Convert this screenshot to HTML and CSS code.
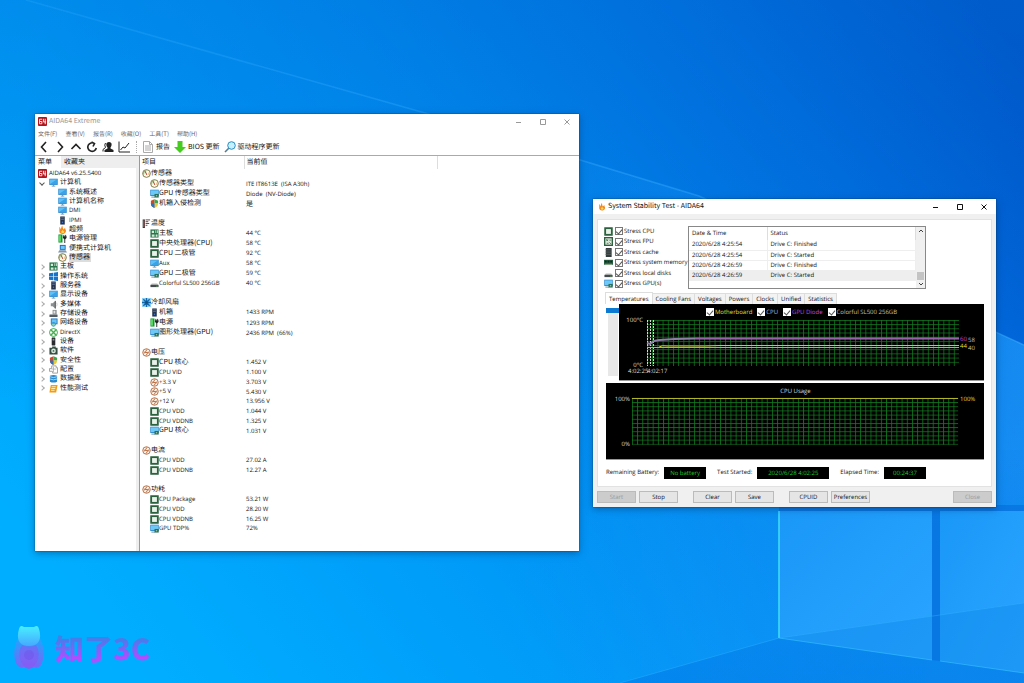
FILE: index.html
```html
<!DOCTYPE html>
<html lang="en">
<head>
<meta charset="utf-8">
<title>AIDA64 Extreme</title>
<link rel="stylesheet" href="styles.css">
</head>
<body>
<svg class="sprite" aria-hidden="true">
  <symbol id="aida" viewBox="0 0 10 10"><rect width="10" height="10" rx="1" fill="#b3141b"/><path d="M4.600 2.500H1.700v5h2.600V5H2M6 2v3.500h3M8 2v6" fill="none" stroke="#fff" stroke-width="1"/></symbol>
  <symbol id="monitor" viewBox="0 0 10 10"><rect x=".3" y=".8" width="9.400" height="6.900" fill="#2b87cf"/><rect x="1" y="1.500" width="8" height="5.300" fill="#5fc0f5"/><path d="M1 6.800 9 1.500v5.300z" fill="#38a3e8"/><path d="M3 9h4M5 7.500V9" stroke="#6c93ad"/></symbol>
  <symbol id="gpu" viewBox="0 0 10 10"><rect x=".3" y=".8" width="9.400" height="7" fill="#2b87cf"/><rect x="1" y="1.500" width="8" height="5.300" fill="#6cc8f7"/><path d="M1.500 9h4" stroke="#5f8aa5"/><rect x="5" y="5.500" width="4.700" height="4" fill="#2b6f58"/><rect x="6.500" y="6.700" width="1.500" height="1.500" fill="#8fc4a0"/></symbol>
  <symbol id="server" viewBox="0 0 10 10"><rect x="2.500" y=".5" width="5" height="9" fill="#26334c"/><path d="M3.500 2h3M3.500 3.800h3" stroke="#7d95bd" stroke-width=".7"/><circle cx="5" cy="7" r=".8" fill="#4979c9"/></symbol>
  <symbol id="fire" viewBox="0 0 10 10"><path d="M1.500 2c1 1 1.200 2 1.500 3L4.500.5C5.500 2 5 3 6 5l2-2c-.5 2 1.500 2 .7 4.500C8 9.500 6.500 10 5 10 3 10 1.500 9 1.500 7z" fill="#f48a1c"/><path d="M3.500 7.500 5 5.500l2 2c0 2-3.500 2-3.500 0" fill="#ffd75c"/></symbol>
  <symbol id="power" viewBox="0 0 10 10"><rect x=".5" y=".5" width="4.500" height="9" fill="#159b32"/><rect x="1.200" y="1.500" width="2" height="7" fill="#5fdf65"/><path d="M7.500 4v6M6.500 1v2M8.500 1v2" stroke="#222"/><path d="M5.500 2.500h4v2l-2 1.500-2-1.500z" fill="#222"/></symbol>
  <symbol id="laptop" viewBox="0 0 10 10"><path d="M2 1h6.500v5.500H2z" fill="#1f69b7"/><path d="M3 2h4.500v3.500H3z" fill="#6cc7f7"/><path d="M1.500 7h7L10 9.500H0z" fill="#7d98b6"/></symbol>
  <symbol id="gauge" viewBox="0 0 10 10"><circle cx="5" cy="5" r="4.300" fill="#fffbe9" stroke="#63622c" stroke-width=".9"/><path d="M2 6A3 3 0 0 1 5 2" fill="none" stroke="#5aa54a" stroke-width=".9"/><path d="M3.500 2.500 5.300 6.500" stroke="#ba2c20" stroke-width="1.100"/><path d="M7.700 4v2.500" stroke="#e28b28" stroke-width=".9"/></symbol>
  <symbol id="board" viewBox="0 0 10 10"><rect x=".5" y=".5" width="9" height="9" fill="#28764c"/><path d="M2 2h2.500v2.500H2zM6 1.500h1v3H6zM8 1.500h1v3H8zM2 6h3v2.500H2zM6.300 6h2v2.500h-2z" fill="#d6ead7"/></symbol>
  <symbol id="cpu" viewBox="0 0 10 10"><rect x=".3" y=".3" width="9.400" height="9.400" fill="#285e3d"/><rect x="2.300" y="2.300" width="5.400" height="5.400" fill="#e9f2e8"/><path d="M1 1h8v8H1z" fill="none" stroke="#52865f" stroke-width=".5" stroke-dasharray="1 1"/></symbol>
  <symbol id="windows" viewBox="0 0 10 10"><path d="M0 1.500 4.500.8v3.900H0zM5.200.7 10 0v4.700H5.200zM0 5.300h4.500v3.900L0 8.500zM5.200 5.300H10V10l-4.800-.7z" fill="#1473cb"/></symbol>
  <symbol id="sound" viewBox="0 0 10 10"><path d="M2 3.500h2L7 1v8.500L4 7H2z" fill="#8b9092"/><path d="M7 1v8.500" stroke="#444"/><path d="M8.500 3q1 2 0 4" fill="none" stroke="#aaa" stroke-width=".6"/></symbol>
  <symbol id="drive" viewBox="0 0 10 10"><path d="M2 5h6l1.500 2h-9z" fill="#bbb"/><rect x=".5" y="6.500" width="9" height="2.500" fill="#454a4c"/><path d="M7 8h1.500" stroke="#68cf62" stroke-width=".8"/></symbol>
  <symbol id="storage" viewBox="0 0 10 10"><path d="M4 1h4.500v5H4z" fill="#8b9092"/><path d="M5 2h2v3H5z" fill="#e4e4e4"/><rect x=".5" y="6" width="9" height="3" rx=".5" fill="#555e62"/></symbol>
  <symbol id="network" viewBox="0 0 10 10"><path d="M2 .5h7.500v6.500H2z" fill="#2178bf"/><path d="M3 1.500h5.500v4.500H3z" fill="#69c3f4"/><circle cx="5" cy="7" r="2.600" fill="#3595da"/><path d="M3 6.500h4l-1 2H4z" fill="#8bd4ba"/></symbol>
  <symbol id="directx" viewBox="0 0 10 10"><circle cx="5" cy="5" r="4.400" fill="#f4fff1" stroke="#2e9d43"/><path d="m2 2 6 6M8 2 2 8" stroke="#45ad51" stroke-width="1.500"/></symbol>
  <symbol id="device" viewBox="0 0 10 10"><rect x="3" y=".5" width="4" height="9" rx=".5" fill="#292b2d"/><path d="M4 2h2v2H4z" fill="#879098"/></symbol>
  <symbol id="software" viewBox="0 0 10 10"><path d="M.5 2h3V.5h4V2h2v7.500h-9z" fill="#354c41"/><circle cx="5" cy="5.500" r="2.600" fill="#dce8df"/><circle cx="5" cy="5.500" r="1" fill="#32785d"/></symbol>
  <symbol id="shield" viewBox="0 0 10 10"><path d="M5 .3 1 2v3c0 3 2 4 4 5z" fill="#ca4b2b"/><path d="m5 .3 4 1.700v3H5z" fill="#3fa44b"/><path d="M5 5h4c0 3-2 4-4 5z" fill="#f0c830"/><path d="M5 5H1c0 3 2 4 4 5z" fill="#2773bd"/></symbol>
  <symbol id="config" viewBox="0 0 10 10"><path d="M3 1h5v2h1.500v6H4V7H.5V4H3z" fill="none" stroke="#999"/><path d="M3 4.500h5M5 2v6" stroke="#999" stroke-width=".7"/></symbol>
  <symbol id="database" viewBox="0 0 10 10"><path d="M1 2q4-2 8 0v6.500q-4 2-8 0z" fill="#2888ce"/><path d="M1 3q4 2 8 0M1 5.500q4 2 8 0" fill="none" stroke="#c3e5fc" stroke-width=".9"/></symbol>
  <symbol id="bench" viewBox="0 0 10 10"><path d="M2 1h7.500L8 9.500H.5z" fill="#f19b16"/><path d="m3 3h4.500M2.500 5H7M2.200 7h4" stroke="#fff2bd"/></symbol>
  <symbol id="thermo" viewBox="0 0 10 10"><path d="M2 .5V10" stroke="#37363a" stroke-width="2.500"/><path d="M2 1.500V9" stroke="#d65147"/><path d="M4 1h5M4 3h3M4 5h4M4 7h2" stroke="#5c3434"/></symbol>
  <symbol id="fan" viewBox="0 0 10 10"><rect width="10" height="10" fill="#8fd0f4"/><path d="M5 0v10M0 5h10M1.500 1.500l7 7M8.500 1.500l-7 7" stroke="#1467a8" stroke-width="1.500"/><circle cx="5" cy="5" r="1.500" fill="#164c77"/></symbol>
  <symbol id="volt" viewBox="0 0 10 10"><circle cx="5" cy="5" r="4.200" fill="#fff1e7" stroke="#a75a2e" stroke-width=".9"/><path d="M5.500 1.500 3.500 5h3L4.500 8.500M2.500 4v2M7.500 4v2" fill="none" stroke="#aa5526" stroke-width=".9"/></symbol>
  <symbol id="fpu" viewBox="0 0 10 10"><rect width="10" height="10" fill="#2e6041"/><rect x="1.500" y="1.500" width="7" height="7" fill="#dbe8da"/><path d="m2.500 2.500 2 2m0-2-2 2M6 3.500h2M3 7h2M6 6l2 2" stroke="#285c3a" stroke-width=".8"/></symbol>
  <symbol id="cache" viewBox="0 0 10 10"><path d="M2 0h6.500v10H2z" fill="#333a3b"/><path d="M1 2h8M1 4.500h8M1 7h8" stroke="#727979" stroke-width=".6"/></symbol>
  <symbol id="memory" viewBox="0 0 10 10"><rect y="2" width="10" height="5.500" fill="#265d41"/><path d="M1 3h2v2H1zM4 3h2v2H4zM7 3h2v2H7z" fill="#132b21"/><path d="M1 7h8" stroke="#c4d7a2" stroke-dasharray=".7 .5"/></symbol>
</svg>

<svg class="wallpaper" viewBox="0 0 1024 683" preserveAspectRatio="none" aria-hidden="true">
  <defs>
    <linearGradient id="sky" x1="150" y1="683" x2="980" y2="0" gradientUnits="userSpaceOnUse"><stop offset="0" stop-color="#00aeff"/><stop offset=".3" stop-color="#009bf8"/><stop offset=".55" stop-color="#0086ed"/><stop offset=".8" stop-color="#0069dc"/><stop offset="1" stop-color="#004fc4"/></linearGradient>
    <linearGradient id="shade" x1="0" y1="0" x2="0" y2="400" gradientUnits="userSpaceOnUse"><stop offset="0" stop-color="#0074d8" stop-opacity=".35"/><stop offset="1" stop-color="#0074d8" stop-opacity="0"/></linearGradient>
    <linearGradient id="beam" x1="500" y1="0" x2="1024" y2="0" gradientUnits="userSpaceOnUse"><stop offset="0" stop-color="#1c9dff" stop-opacity="0"/><stop offset="1" stop-color="#24a2ff" stop-opacity=".6"/></linearGradient>
    <linearGradient id="fall" x1="0" y1="400" x2="0" y2="683" gradientUnits="userSpaceOnUse"><stop offset="0" stop-color="#0078e7" stop-opacity="0"/><stop offset="1" stop-color="#0078e6" stop-opacity=".5"/></linearGradient>
    <linearGradient id="ray" x1="0" y1="0" x2="1" y2="0"><stop offset="0" stop-color="#31adff" stop-opacity=".25"/><stop offset="1" stop-color="#45b7ff" stop-opacity=".45"/></linearGradient>
    <linearGradient id="pane" x1="0" y1="0" x2="1" y2="1"><stop offset="0" stop-color="#1a98f8"/><stop offset="1" stop-color="#2aa4ff"/></linearGradient>
  </defs>
  <rect width="1024" height="683" fill="url(#sky)"/>
  <rect width="1024" height="400" fill="url(#shade)"/>
  <path d="M26 0 425 113 699 196 1024 345V683H500V135z" fill="url(#beam)"/>
  <path d="M779 450H1024V683H620L779 638z" fill="url(#fall)"/>
  <path d="M26 0 425 113 699 196 1024 345" fill="none" stroke="url(#ray)" stroke-width="1.500"/>
  <path d="M779 505H1024V511H779zM932 511h8v150l-8-1z" fill="#0873de" opacity=".8"/>
  <path d="M779 511h153v149l-153-22z" fill="url(#pane)"/>
  <path d="M940 511h84v162l-84-12z" fill="url(#pane)"/>
  <path d="m779 638 153-22v44zM940 615l84-12v70l-84-12z" fill="#0d86ea" opacity=".4"/>
  <path d="M779 638l153 22M940 661l84 12" fill="none" stroke="#35c2ff" opacity=".6"/>
  <path d="M779 511v127" stroke="#3edaff" stroke-width="2" opacity=".8"/>
  <path d="m620 683 159-45 245-35" fill="none" stroke="#38b5ff" opacity=".4"/>
</svg>

<main class="desktop">
<section class="window explorer" aria-label="AIDA64 Extreme">
  <header class="titlebar">
    <svg class="icon"><use href="#aida"/></svg><h1>AIDA64 Extreme</h1>
    <div class="controls">
      <button aria-label="Minimize"><svg viewBox="0 0 8 8"><path d="M1 4.500h5"/></svg></button>
      <button aria-label="Maximize"><svg viewBox="0 0 8 8"><path d="M1.500 1.500h5v5h-5z"/></svg></button>
      <button aria-label="Close"><svg viewBox="0 0 8 8"><path d="m1.500 1.500 5 5m0-5-5 5"/></svg></button>
    </div>
  </header>
  <nav class="menu"><button>文件(F)</button><button>查看(V)</button><button>报告(R)</button><button>收藏(O)</button><button>工具(T)</button><button>帮助(H)</button></nav>
  <div class="toolbar">
    <button aria-label="Back"><svg viewBox="0 0 12 12"><path d="M8 1 3.500 6 8 11"/></svg></button>
    <button aria-label="Forward"><svg viewBox="0 0 12 12"><path d="m4 1 4.500 5L4 11"/></svg></button>
    <button aria-label="Up"><svg viewBox="0 0 12 12"><path d="m1.500 8 4.500-4.500L10.500 8"/></svg></button>
    <button aria-label="Refresh"><svg viewBox="0 0 12 12"><path d="M8.500 2.500A4.300 4.300 0 1 0 10.300 7M5.500 1l3 1.500L7 5.500"/></svg></button>
    <button aria-label="User"><svg viewBox="0 0 12 12"><path class="solid" d="M7 1c3.500 0 3 4 1.500 5.500V7.500l3 1.500V11H2.500V9l3-1.500V6.500C4 5 3.500 1 7 1"/><path class="thin" d="M3.500 2Q2 4 3.500 6.500L1 8.500v2"/></svg></button>
    <button aria-label="Graph"><svg viewBox="0 0 12 12"><path class="thin" d="M1 .5v10.500h11"/><path class="thin" d="m2.500 9 2.500-3 2 1 4-5"/></svg></button>
    <i class="divider"></i>
    <button><svg viewBox="0 0 12 12"><path class="page" d="M1.500.5h6l3 3v8h-9zM7.500.5v3h3M3 5h6M3 7h6M3 9h6"/></svg>报告</button>
    <button><svg viewBox="0 0 12 12"><path class="arrow" d="M3.500 0h5v6H12l-6 6-6-6h3.500z"/></svg>BIOS 更新</button>
    <button><svg viewBox="0 0 12 12"><path class="handle" d="m1 11 4-4"/><circle class="lens" cx="7.500" cy="4.500" r="3.800"/></svg>驱动程序更新</button>
  </div>
  <div class="workspace">
    <aside class="sidebar">
      <div class="side-tabs" role="tablist"><button role="tab" aria-selected="true">菜单</button><button role="tab" aria-selected="false">收藏夹</button></div>
      <ul class="tree">
        <li class="root en"><svg class="icon"><use href="#aida"/></svg>AIDA64 v6.25.5400</li>
        <li class="branch open"><svg class="icon"><use href="#monitor"/></svg>计算机</li>
        <li class="leaf"><svg class="icon"><use href="#monitor"/></svg>系统概述</li>
        <li class="leaf"><svg class="icon"><use href="#monitor"/></svg>计算机名称</li>
        <li class="leaf en"><svg class="icon"><use href="#monitor"/></svg>DMI</li>
        <li class="leaf en"><svg class="icon"><use href="#server"/></svg>IPMI</li>
        <li class="leaf"><svg class="icon"><use href="#fire"/></svg>超频</li>
        <li class="leaf"><svg class="icon"><use href="#power"/></svg>电源管理</li>
        <li class="leaf"><svg class="icon"><use href="#laptop"/></svg>便携式计算机</li>
        <li class="leaf"><svg class="icon"><use href="#gauge"/></svg><span class="selected">传感器</span></li>
        <li class="branch"><svg class="icon"><use href="#board"/></svg>主板</li>
        <li class="branch"><svg class="icon"><use href="#windows"/></svg>操作系统</li>
        <li class="branch"><svg class="icon"><use href="#server"/></svg>服务器</li>
        <li class="branch"><svg class="icon"><use href="#monitor"/></svg>显示设备</li>
        <li class="branch"><svg class="icon"><use href="#sound"/></svg>多媒体</li>
        <li class="branch"><svg class="icon"><use href="#storage"/></svg>存储设备</li>
        <li class="branch"><svg class="icon"><use href="#network"/></svg>网络设备</li>
        <li class="branch en"><svg class="icon"><use href="#directx"/></svg>DirectX</li>
        <li class="branch"><svg class="icon"><use href="#device"/></svg>设备</li>
        <li class="branch"><svg class="icon"><use href="#software"/></svg>软件</li>
        <li class="branch"><svg class="icon"><use href="#shield"/></svg>安全性</li>
        <li class="branch"><svg class="icon"><use href="#config"/></svg>配置</li>
        <li class="branch"><svg class="icon"><use href="#database"/></svg>数据库</li>
        <li class="branch"><svg class="icon"><use href="#bench"/></svg>性能测试</li>
      </ul>
    </aside>
    <div class="details">
      <table class="sensors">
        <thead><tr><th class="name">项目</th><th class="value">当前值</th><th></th></tr></thead>
        <tbody>
        <tr class="group"><td><svg class="icon"><use href="#gauge"/></svg>传感器</td><td></td></tr>
        <tr><td><svg class="icon"><use href="#gauge"/></svg>传感器类型</td><td class="en">ITE IT8613E&nbsp; (ISA A30h)</td></tr>
        <tr><td><svg class="icon"><use href="#gpu"/></svg>GPU 传感器类型</td><td class="en">Diode&nbsp; (NV-Diode)</td></tr>
        <tr><td><svg class="icon"><use href="#shield"/></svg>机箱入侵检测</td><td>是</td></tr>
        <tr><td>&nbsp;</td></tr>
        <tr class="group"><td><svg class="icon"><use href="#thermo"/></svg>温度</td><td></td></tr>
        <tr><td><svg class="icon"><use href="#board"/></svg>主板</td><td class="en">44 °C</td></tr>
        <tr><td><svg class="icon"><use href="#cpu"/></svg>中央处理器(CPU)</td><td class="en">58 °C</td></tr>
        <tr><td><svg class="icon"><use href="#cpu"/></svg>CPU 二极管</td><td class="en">92 °C</td></tr>
        <tr class="en"><td><svg class="icon"><use href="#monitor"/></svg>Aux</td><td>58 °C</td></tr>
        <tr><td><svg class="icon"><use href="#gpu"/></svg>GPU 二极管</td><td class="en">59 °C</td></tr>
        <tr class="en"><td><svg class="icon"><use href="#drive"/></svg>Colorful SL500 256GB</td><td>40 °C</td></tr>
        <tr><td>&nbsp;</td></tr>
        <tr class="group"><td><svg class="icon"><use href="#fan"/></svg>冷却风扇</td><td></td></tr>
        <tr><td><svg class="icon"><use href="#server"/></svg>机箱</td><td class="en">1433 RPM</td></tr>
        <tr><td><svg class="icon"><use href="#power"/></svg>电源</td><td class="en">1293 RPM</td></tr>
        <tr><td><svg class="icon"><use href="#gpu"/></svg>图形处理器(GPU)</td><td class="en">2436 RPM&nbsp; (66%)</td></tr>
        <tr><td>&nbsp;</td></tr>
        <tr class="group"><td><svg class="icon"><use href="#volt"/></svg>电压</td><td></td></tr>
        <tr><td><svg class="icon"><use href="#cpu"/></svg>CPU 核心</td><td class="en">1.452 V</td></tr>
        <tr class="en"><td><svg class="icon"><use href="#cpu"/></svg>CPU VID</td><td>1.100 V</td></tr>
        <tr class="en"><td><svg class="icon"><use href="#volt"/></svg>+3.3 V</td><td>3.703 V</td></tr>
        <tr class="en"><td><svg class="icon"><use href="#volt"/></svg>+5 V</td><td>5.430 V</td></tr>
        <tr class="en"><td><svg class="icon"><use href="#volt"/></svg>+12 V</td><td>13.956 V</td></tr>
        <tr class="en"><td><svg class="icon"><use href="#cpu"/></svg>CPU VDD</td><td>1.044 V</td></tr>
        <tr class="en"><td><svg class="icon"><use href="#cpu"/></svg>CPU VDDNB</td><td>1.325 V</td></tr>
        <tr><td><svg class="icon"><use href="#gpu"/></svg>GPU 核心</td><td class="en">1.031 V</td></tr>
        <tr><td>&nbsp;</td></tr>
        <tr class="group"><td><svg class="icon"><use href="#volt"/></svg>电流</td><td></td></tr>
        <tr class="en"><td><svg class="icon"><use href="#cpu"/></svg>CPU VDD</td><td>27.02 A</td></tr>
        <tr class="en"><td><svg class="icon"><use href="#cpu"/></svg>CPU VDDNB</td><td>12.27 A</td></tr>
        <tr><td>&nbsp;</td></tr>
        <tr class="group"><td><svg class="icon"><use href="#volt"/></svg>功耗</td><td></td></tr>
        <tr class="en"><td><svg class="icon"><use href="#cpu"/></svg>CPU Package</td><td>53.21 W</td></tr>
        <tr class="en"><td><svg class="icon"><use href="#cpu"/></svg>CPU VDD</td><td>28.20 W</td></tr>
        <tr class="en"><td><svg class="icon"><use href="#cpu"/></svg>CPU VDDNB</td><td>16.25 W</td></tr>
        <tr class="en"><td><svg class="icon"><use href="#gpu"/></svg>GPU TDP%</td><td>72%</td></tr>
        </tbody>
      </table>
    </div>
  </div>
</section>

<section class="window stability" aria-label="System Stability Test">
  <header class="titlebar">
    <svg class="icon"><use href="#fire"/></svg><h2>System Stability Test - AIDA64</h2>
    <div class="controls">
      <button aria-label="Minimize"><svg viewBox="0 0 8 8"><path d="M1 4.500h5"/></svg></button>
      <button aria-label="Maximize"><svg viewBox="0 0 8 8"><path d="M1.500 1.500h5v5h-5z"/></svg></button>
      <button aria-label="Close"><svg viewBox="0 0 8 8"><path d="m1.500 1.500 5 5m0-5-5 5"/></svg></button>
    </div>
  </header>
  <div class="frame en">
    <div class="panel">
      <div class="top">
        <div class="stress">
          <label><svg class="icon"><use href="#cpu"/></svg><input type="checkbox" checked>Stress CPU</label>
          <label><svg class="icon"><use href="#fpu"/></svg><input type="checkbox" checked>Stress FPU</label>
          <label><svg class="icon"><use href="#cache"/></svg><input type="checkbox" checked>Stress cache</label>
          <label><svg class="icon"><use href="#memory"/></svg><input type="checkbox" checked>Stress system memory</label>
          <label><svg class="icon"><use href="#drive"/></svg><input type="checkbox" checked>Stress local disks</label>
          <label><svg class="icon"><use href="#gpu"/></svg><input type="checkbox" checked>Stress GPU(s)</label>
        </div>
        <div class="log">
          <table>
            <thead><tr><th>Date &amp; Time</th><th>Status</th></tr></thead>
            <tbody>
              <tr><td>2020/6/28 4:25:54</td><td>Drive C: Finished</td></tr>
              <tr><td>2020/6/28 4:25:54</td><td>Drive C: Started</td></tr>
              <tr><td>2020/6/28 4:26:59</td><td>Drive C: Finished</td></tr>
              <tr class="current"><td>2020/6/28 4:26:59</td><td>Drive C: Started</td></tr>
            </tbody>
          </table>
          <div class="scroll"><svg viewBox="0 0 8 8"><path d="m2 5 2-2 2 2"/></svg><i></i><svg viewBox="0 0 8 8"><path d="m2 3 2 2 2-2"/></svg></div>
        </div>
      </div>
      <div class="tabs" role="tablist">
        <button role="tab" aria-selected="true">Temperatures</button><button role="tab">Cooling Fans</button><button role="tab">Voltages</button><button role="tab">Powers</button><button role="tab">Clocks</button><button role="tab">Unified</button><button role="tab">Statistics</button>
      </div>
      <div class="temps">
        <div class="picker"><i></i></div>
        <div class="chart">
          <div class="legend">
            <label class="yellow"><input type="checkbox" checked>Motherboard</label>
            <label class="silver"><input type="checkbox" checked>CPU</label>
            <label class="magenta"><input type="checkbox" checked>GPU Diode</label>
            <label class="tan"><input type="checkbox" checked>Colorful SL500 256GB</label>
          </div>
          <svg viewBox="0 0 365 64">
            <defs><pattern id="cells" width="5.200" height="4.180" patternUnits="userSpaceOnUse" x="28" y="4"><path d="M0 .5H5.200M.5 0V4.180" fill="none" stroke="#12791f" stroke-width=".8"/></pattern></defs>
            <rect x="28" y="4" width="312" height="46" fill="url(#cells)"/>
            <path d="M28.500 4v46M31.500 4v46M34.500 4v46" stroke="#d5d5d5" stroke-dasharray="2 1"/>
            <path d="m28 27 3 1 4-3 5-1 16-1 20-.5h264" fill="none" stroke="#8e7fa6" stroke-width="2"/>
            <path d="M76 22.500h264" stroke="#9e55aa" stroke-width=".7"/>
            <path d="M28 31.500h312" stroke="#b8aa85"/>
            <path d="M40 31q3-2 8-1h38l15-.5h239" fill="none" stroke="#cccb26"/>
            <g class="scale"><text x="24" y="6" text-anchor="end">100°C</text><text x="24" y="51" text-anchor="end">0°C</text><text x="9" y="57">4:02:25</text><text x="28" y="57">4:02:17</text></g>
            <g class="scale"><text class="magenta" x="341" y="25">60</text><text class="silver" x="349" y="26">58</text><text class="yellow" x="341" y="32">44</text><text class="tan" x="349" y="34">40</text></g>
          </svg>
        </div>
      </div>
      <div class="chart usage">
        <svg viewBox="0 0 379 76">
          <defs><pattern id="usage-cells" width="5.200" height="4.180" patternUnits="userSpaceOnUse" x="26" y="15"><path d="M0 .5H5.200M.5 0V4.180" fill="none" stroke="#12791f" stroke-width=".8"/></pattern></defs>
          <rect x="26" y="15" width="327" height="47" fill="url(#usage-cells)"/>
          <path d="M26 15.500h327" stroke="#b8b92c"/>
          <g class="scale"><text x="190" y="10" text-anchor="middle">CPU Usage</text><text x="24" y="18" text-anchor="end">100%</text><text x="24" y="63" text-anchor="end">0%</text><text class="yellow" x="355" y="18">100%</text></g>
        </svg>
      </div>
      <div class="status">
        <span>Remaining Battery:</span><output>No battery</output>
        <span>Test Started:</span><output class="wide">2020/6/28 4:02:25</output>
        <span>Elapsed Time:</span><output>00:24:37</output>
      </div>
    </div>
    <footer class="actions">
      <button disabled>Start</button><button>Stop</button>
      <button class="apart">Clear</button><button>Save</button>
      <button class="apart">CPUID</button><button>Preferences</button>
      <button class="last" disabled>Close</button>
    </footer>
  </div>
</section>

<div class="brand">
  <svg viewBox="0 0 32 46" aria-hidden="true">
    <defs><linearGradient id="body" x1="0" y1="0" x2="0" y2="1"><stop offset="0" stop-color="#25a5ff"/><stop offset="1" stop-color="#a64cf5"/></linearGradient><linearGradient id="head" x1="0" y1="0" x2="0" y2="1"><stop offset="0" stop-color="#49efff"/><stop offset="1" stop-color="#45a9ff"/></linearGradient></defs>
    <path d="M6 12C0 20 0 36 5 41q3 3 6 1 5 3 10 0 3 2 6-1c5-5 5-21-1-29z" fill="url(#body)" opacity=".75"/>
    <path d="M9 20q7 3 14 0c5 8 3 20-7 24C6 40 4 28 9 20" fill="#964ff1" opacity=".5"/>
    <circle cx="16" cy="30" r="5" fill="#704ce6" opacity=".35"/>
    <path d="M6 4Q7-1 11 2h10q4-3 5 2c3 10 0 17-10 17S3 14 6 4" fill="url(#head)"/>
  </svg>
  <span>知了3C</span>
</div>
</main>
</body>
</html>
```

FILE: styles.css
```css
* { box-sizing: border-box; }
body { margin: 0; min-height: 100vh; overflow: hidden; color: #111; font: 7px/9px "Noto Sans CJK SC", "Open Sans", sans-serif; text-rendering: geometricPrecision; }
h1, h2 { margin: 0; font: inherit; }
button { margin: 0; padding: 0; border: 0; background: none; color: inherit; font: inherit; text-rendering: inherit; white-space: nowrap; }
table { border-collapse: collapse; border-spacing: 0; }
th, td { padding: 0; font-weight: 400; text-align: left; white-space: nowrap; }
.en { font-family: "Open Sans", sans-serif; font-size: 6px; }
.sprite { position: absolute; width: 0; height: 0; }
.wallpaper { position: absolute; width: 100%; height: 100%; }
.desktop { position: relative; min-height: 100vh; }
.icon { width: 9px; height: 9px; flex: none; }

.window { position: absolute; background: #fff; box-shadow: 0 2px 7px #00326680, 0 0 1px #123; }
.explorer { left: 35px; top: 114px; width: min(544px, 100%); }
.stability { left: 593px; top: 199px; width: min(403px, 100%); }
.titlebar { display: flex; align-items: center; gap: 2px; height: 15px; padding: 0 4px 0 3px; }
.controls { display: flex; margin-left: auto; gap: 8px; }
.controls button { display: grid; place-items: center; width: 16px; }
.controls svg { width: 8px; height: 8px; fill: none; stroke: currentColor; stroke-width: 1; }
.explorer .titlebar { color: #999; }
.stability .titlebar { gap: 2px; padding-left: 5px; }
.stability .titlebar .icon { width: 8px; }

.menu { display: flex; gap: 8px; height: 10px; padding-left: 3px; color: #666; font-size: 6px; }
.menu button { line-height: 10px; }
.toolbar { display: flex; align-items: center; height: 17px; gap: 4px; padding: 0 3px; border-bottom: 1px solid #aaa; }
.toolbar button { display: flex; align-items: center; gap: 2px; }
.toolbar svg { width: 12px; height: 12px; fill: none; stroke: #222; stroke-width: 1.6; }
.toolbar .solid { fill: #222; stroke: none; }
.toolbar .thin { stroke-width: 1; }
.toolbar .page { fill: #fff; stroke: #aaa; stroke-width: 1; }
.toolbar .arrow { fill: #46cb21; stroke: none; }
.toolbar .handle { stroke: #557b92; }
.toolbar .lens { fill: #c7efff; stroke: #248fc5; stroke-width: 1; }
.divider { height: 12px; margin: 0 1px 0 2px; border-left: 1px dotted #aaa; }

.workspace { display: grid; grid-template-columns: 104px 1fr; }
.sidebar { border-right: 3px solid #eee; }
.side-tabs { display: flex; height: 12px; background: #eee; }
.side-tabs button { padding: 0 3px; }
.side-tabs [aria-selected="true"] { width: 26px; background: #fff; text-align: left; }
.tree { display: grid; grid-auto-rows: 1fr; height: 225px; margin: 0; padding: 1px 0 0; list-style: none; }
.tree li { display: flex; align-items: center; gap: 2px; line-height: 9px; white-space: nowrap; }
.tree .root { padding-left: 3px; }
.tree .leaf { padding-left: 23px; }
.tree .branch { padding-left: 5px; }
.tree .branch::before { content: ""; width: 3px; height: 3px; margin: 0 3px 0 0; border: solid #aaa; border-width: 1px 1px 0 0; transform: rotate(45deg); }
.tree .open::before { border-color: #555; transform: rotate(135deg); }
.selected { padding-right: 1px; background: #ddd; }
.details { min-width: 0; padding-bottom: 17px; border-left: 1px solid #999; }
.sensors { width: 100%; height: 378px; table-layout: fixed; }
.sensors th { height: 13px; border-right: 1px solid #ddd; }
.sensors .name { width: 104px; padding-left: 2px; }
.sensors .value { width: 193px; padding-left: 2px; }
.sensors th:last-child { border: 0; }
.sensors td { line-height: 9px; }
.sensors td:first-child { padding-left: 10px; }
.sensors .group td:first-child { padding-left: 2px; }
.sensors td + td { padding-left: 2px; }
.sensors .icon { display: inline-block; vertical-align: middle; }

input[type="checkbox"] { appearance: none; display: grid; place-content: center; width: 8px; height: 8px; margin: 0; border: 1px solid #777; background: #fff; flex: none; }
input[type="checkbox"]:checked::before { content: ""; width: 3px; height: 5px; border: solid #555; border-width: 0 1px 1px 0; transform: rotate(40deg); }
.frame { padding: 5px 4px 0; background: #f0f0f0; }
.panel { padding: 6px 7px 7px 6px; border: 1px solid #e2e2e2; background: #fff; }
.top { display: flex; }
.stress { display: grid; grid-auto-rows: 1fr; width: 84px; height: 63px; }
.stress label { display: flex; align-items: center; gap: 1px; white-space: nowrap; }
.stress .icon { margin-right: 1px; }
.log { display: flex; width: 238px; height: 63px; border: 1px solid #888; }
.log table { flex: 1; align-self: flex-start; }
.log th { height: 13px; border-right: 1px solid #ddd; }
.log td { height: 10px; border: solid #eee; border-width: 0 1px 1px 0; }
.log th, .log td { padding-left: 3px; }
.log th:first-child { width: 78px; }
.log .current { background: #eee; }
.scroll { display: flex; flex-direction: column; justify-content: space-between; align-items: center; width: 9px; background: #f0f0f0; }
.scroll svg { width: 8px; height: 8px; fill: none; stroke: #444; }
.scroll i { width: 7px; height: 8px; margin-top: auto; background: #c4c4c4; }
.tabs { display: flex; align-items: flex-end; height: 15px; padding-left: 1px; }
.tabs button { height: 11px; padding: 0 3px; border: 1px solid #ddd; border-width: 1px 1px 0 0; background: #f3f3f3; line-height: 10px; }
.tabs [aria-selected="true"] { height: 12px; border-left-width: 1px; background: #fff; }
.temps { display: flex; padding-left: 2px; }
.picker { width: 13px; padding-top: 4px; }
.picker::after { content: ""; display: block; height: 63px; margin: 0 1px 0 2px; background: #e8e8e8; }
.picker i { display: block; height: 5px; background: #0b78d1; }
.chart { flex: 1; background: #000; border-bottom: 1px solid #999; }
.chart > svg { display: block; width: 100%; height: auto; }
.legend { display: flex; justify-content: center; gap: 5px; height: 12px; padding-top: 4px; line-height: 8px; }
.legend label { display: flex; gap: 1px; white-space: nowrap; }
.legend input { border-color: #fff; }
.usage { margin: 2px 0 0 2px; }
.scale { fill: #ddd; }
.yellow { color: #e0df32; fill: #e0df32; }
.silver { color: #b8bfd4; fill: #b8bfd4; }
.magenta { color: #ce43d4; fill: #ce43d4; }
.tan { color: #d0c29d; fill: #d0c29d; }
.status { display: flex; align-items: center; justify-content: space-between; margin: 7px 58px 0 2px; white-space: nowrap; }
.status output { width: 42px; height: 12px; background: #000; color: #22c936; line-height: 12px; text-align: center; }
.status .wide { width: 72px; }
.status output + span { margin-left: 6px; }
.actions { display: flex; gap: 3px; padding: 4px 0; }
.actions button { width: 39px; height: 12px; border: 1px solid #bbb; background: #e5e5e5; line-height: 10px; text-align: center; }
.actions button:disabled { background: #ccc; color: #999; }
.actions .apart { margin-left: 12px; }
.actions .last { margin-left: auto; }

.brand { position: absolute; left: 13px; bottom: 12px; display: flex; align-items: center; gap: 10px; }
.brand svg { width: 32px; height: 46px; }
.brand span { background: linear-gradient(#3f80e9 20%, #b14cff 80%); background-clip: text; color: transparent; font: 900 29px/34px "Noto Sans CJK SC", sans-serif; }
```
